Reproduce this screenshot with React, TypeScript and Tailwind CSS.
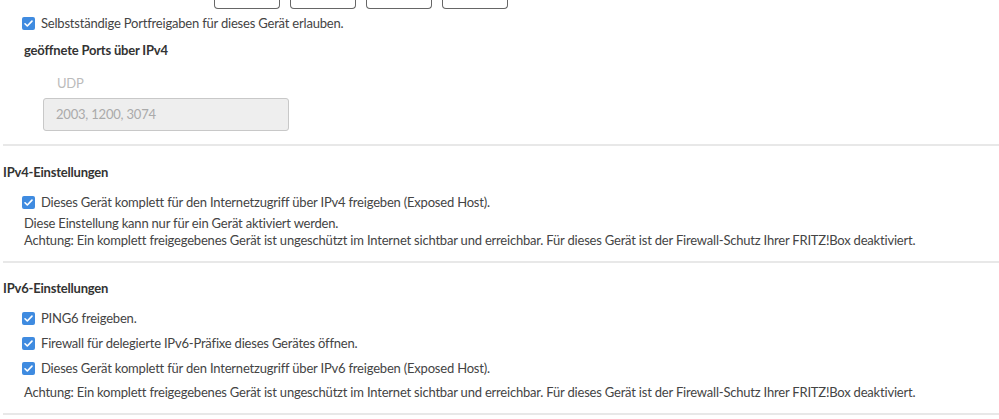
import React from "react";

function Check({ label }: { label: string }) {
  return (
    <label className="flex items-center gap-[6px] h-[25px]">
      <span className="w-[13px] h-[13px] rounded-[2px] bg-[#3f8be0] flex items-center justify-center shrink-0">
        <svg width="11" height="11" viewBox="0 0 12 12" fill="none">
          <path d="M2.2 6.3l2.5 2.4 5.1-5.3" stroke="#fff" strokeWidth="1.8" strokeLinecap="round" strokeLinejoin="round" />
        </svg>
      </span>
      <span>{label}</span>
    </label>
  );
}

const warn =
  "Achtung: Ein komplett freigegebenes Gerät ist ungeschützt im Internet sichtbar und erreichbar. Für dieses Gerät ist der Firewall-Schutz Ihrer FRITZ!Box deaktiviert.";

export default function App() {
  return (
    <div className="w-[999px] h-[419px] overflow-hidden bg-white text-[#444] text-[13px] leading-[17px] tracking-[-0.2px] font-['Lato',sans-serif]">
      {/* cut-off inputs above */}
      <div className="flex gap-[10px] pl-[214px] h-[9px]">
        {[0, 1, 2, 3].map((i) => (
          <div key={i} className="w-[66px] h-[9px] border-x border-b border-[#666] rounded-b-[4px]" />
        ))}
      </div>

      <div className="pl-[22px] pt-[2px]">
        <Check label="Selbstständige Portfreigaben für dieses Gerät erlauben." />
      </div>
      <div className="pl-[24px] pt-[6px] font-bold text-[#333]">geöffnete Ports über IPv4</div>
      <div className="pl-[57px] pt-[16px] text-[#bbb]">UDP</div>
      <div className="pl-[43px] pt-[6px]">
        <div className="w-[246px] h-[33px] border border-[#c8c8c8] rounded-[3px] bg-[#eeeeee] text-[#aaa] flex items-center px-[12px]">
          2003, 1200, 3074
        </div>
      </div>

      <div className="ml-[3px] mt-[13px] border-t-2 border-[#e8e8e8]" />

      <div className="pl-[3px] pt-[18px] font-bold text-[#333]">IPv4-Einstellungen</div>
      <div className="pl-[22px] pt-[9px]">
        <Check label="Dieses Gerät komplett für den Internetzugriff über IPv4 freigeben (Exposed Host)." />
      </div>
      <div className="pl-[24px]">Diese Einstellung kann nur für ein Gerät aktiviert werden.</div>
      <div className="pl-[24px]">{warn}</div>

      <div className="ml-[3px] mt-[12px] border-t-2 border-[#e8e8e8]" />

      <div className="pl-[3px] pt-[17px] font-bold text-[#333]">IPv6-Einstellungen</div>
      <div className="pl-[22px] pt-[9px] flex flex-col">
        <Check label="PING6 freigeben." />
        <Check label="Firewall für delegierte IPv6-Präfixe dieses Gerätes öffnen." />
        <Check label="Dieses Gerät komplett für den Internetzugriff über IPv6 freigeben (Exposed Host)." />
      </div>
      <div className="pl-[24px] pt-[3px]">{warn}</div>

      <div className="ml-[3px] mt-[12px] border-t-2 border-[#e8e8e8]" />
    </div>
  );
}
